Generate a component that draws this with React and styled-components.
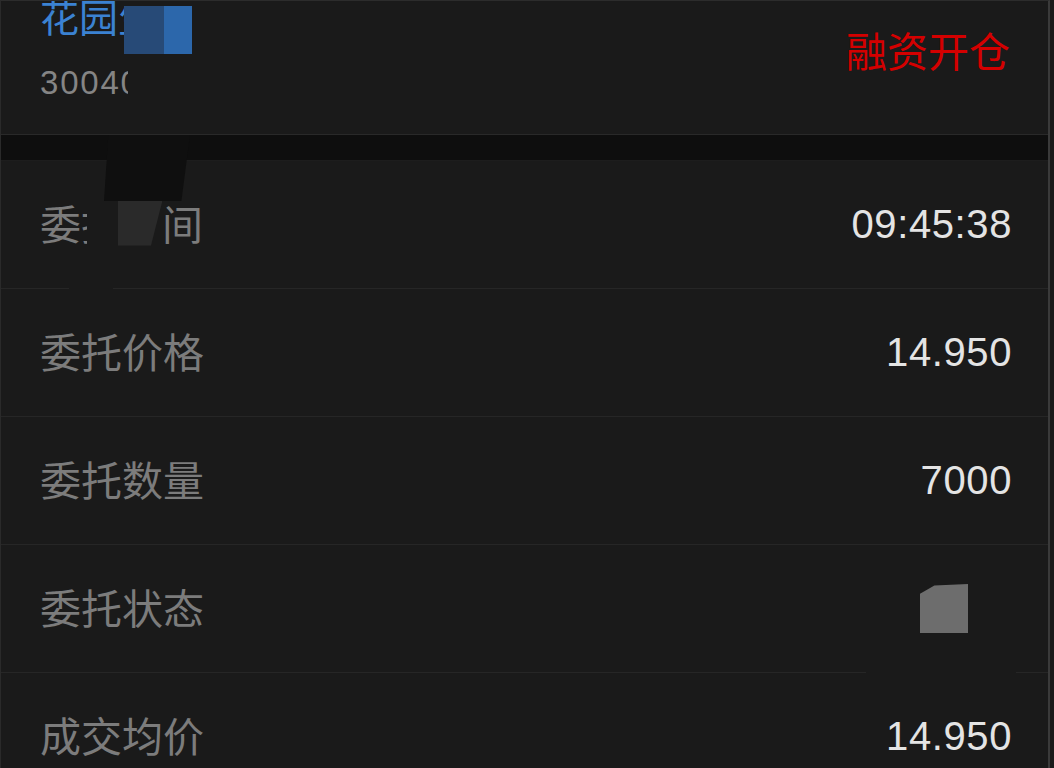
import React from 'react'
import styled, { createGlobalStyle } from 'styled-components'

const GlobalStyle = createGlobalStyle`
    html, body {
        margin: 0;
        padding: 0;
        background: #1a1a1a;
        overflow: hidden;
    }

    body {
        font-family: "Liberation Sans", "Noto Sans CJK SC", sans-serif;
    }
`

const Page = styled.div`
    position: relative;
    width: 1050px;
    height: 768px;
    overflow: hidden;
    background-color: #1a1a1a;
    border-top: 1px solid #2c2c2c;
    border-left: 1px solid #2a2a2a;
    border-right: 2px solid #3a3a3a;
    box-sizing: border-box;
`

const Header = styled.div`
    display: flex;
    justify-content: space-between;
    align-items: flex-start;
    height: 133px;
    padding: 0 38px 0 39px;
    border-bottom: 1px solid #292929;
    overflow: hidden;
`

const Stock = styled.div`
    display: flex;
    flex-direction: column;
`

const StockName = styled.div`
    margin-top: -6px;
    height: 40px;
    line-height: 40px;
    font-family: "Noto Sans CJK SC", sans-serif;
    font-size: 39px;
    color: #3b82d2;
    white-space: nowrap;
`

const StockCode = styled.div`
    margin-top: 31px;
    width: 88px;
    height: 34px;
    line-height: 34px;
    font-size: 33px;
    color: #858585;
    letter-spacing: 1.8px;
    white-space: nowrap;
    overflow: hidden;
`

const Tag = styled.div`
    margin-top: 27px;
    line-height: 42px;
    font-family: "Noto Sans CJK SC", sans-serif;
    font-size: 41px;
    color: #d40000;
`

const Band = styled.div`
    height: 25px;
    background-color: #0e0e0e;
    border-bottom: 1px solid #1d1d1d;
`

const Row = styled.div`
    display: flex;
    justify-content: space-between;
    align-items: center;
    height: 127px;
    padding: 0 36px 0 39px;
    border-bottom: 1px solid #262626;
`

const Label = styled.span`
    display: flex;
    align-items: center;
    margin-bottom: 6px;
    font-family: "Noto Sans CJK SC", sans-serif;
    font-size: 41px;
    color: #7c7c7c;
    white-space: nowrap;
`

const Value = styled.span`
    display: flex;
    align-items: center;
    font-family: "Liberation Sans", sans-serif;
    font-size: 40px;
    color: #e4e4e4;
    letter-spacing: 0.6px;
`

// a glyph sliced by the redaction, only its left edge still shows
const Sliver = styled.span`
    display: inline-block;
    width: ${props => props.keep}px;
    margin-right: ${props => props.gap || 0}px;
    overflow: hidden;
    vertical-align: top;
`

// redaction marks painted into the screenshot
const Blot = styled.span`
    display: inline-block;
    width: ${props => props.w}px;
    height: ${props => props.h}px;
    background: ${props => props.color};
    clip-path: ${props => props.clip || 'none'};
    vertical-align: top;
    margin-top: ${props => props.lift || 0}px;
    margin-right: ${props => props.after || 0}px;
`

const Smear = styled.div`
    position: absolute;
    left: 103px;
    top: 134px;
    width: 86px;
    height: 66px;
    background: #0f0f0f;
    clip-path: polygon(5% 0, 100% 0, 90% 100%, 0 100%);
`

const LineGap = styled.div`
    position: absolute;
    left: ${props => props.x}px;
    top: ${props => props.y}px;
    width: ${props => props.w}px;
    height: 3px;
    background: #1a1a1a;
`

const App = () => (
    <>
        <GlobalStyle />
        <Page>
            <Header>
                <Stock>
                    <StockName>
                        花园
                        <Sliver keep={ 6 }>生</Sliver>
                        <Blot w={ 40 } h={ 48 } lift={ 11 } color="#274a77" />
                        <Blot w={ 28 } h={ 48 } lift={ 11 } color="#2c67ab" />
                    </StockName>
                    <StockCode>300401</StockCode>
                </Stock>
                <Tag>融资开仓</Tag>
            </Header>
            <Band />
            <Row>
                <Label>
                    委
                    <Sliver keep={ 6 } gap={ 31 }>托</Sliver>
                    <Blot
                        w={ 44 }
                        h={ 48 }
                        color="#2a2a2a"
                        clip="polygon(0 0, 100% 0, 100% 10%, 75% 100%, 0 100%)" />
                    间
                </Label>
                <Value>09:45:38</Value>
            </Row>
            <Row>
                <Label>委托价格</Label>
                <Value>14.950</Value>
            </Row>
            <Row>
                <Label>委托数量</Label>
                <Value>7000</Value>
            </Row>
            <Row>
                <Label>委托状态</Label>
                <Value>
                    <Blot
                        w={ 48 }
                        h={ 49 }
                        after={ 44 }
                        color="#6d6d6d"
                        clip="polygon(0 20%, 30% 3%, 100% 0, 100% 100%, 0 100%)" />
                </Value>
            </Row>
            <Row>
                <Label>成交均价</Label>
                <Value>14.950</Value>
            </Row>

            <Smear />
            <LineGap x={ 68 } y={ 287 } w={ 44 } />
            <LineGap x={ 865 } y={ 669 } w={ 150 } />
        </Page>
    </>
)

export default App
